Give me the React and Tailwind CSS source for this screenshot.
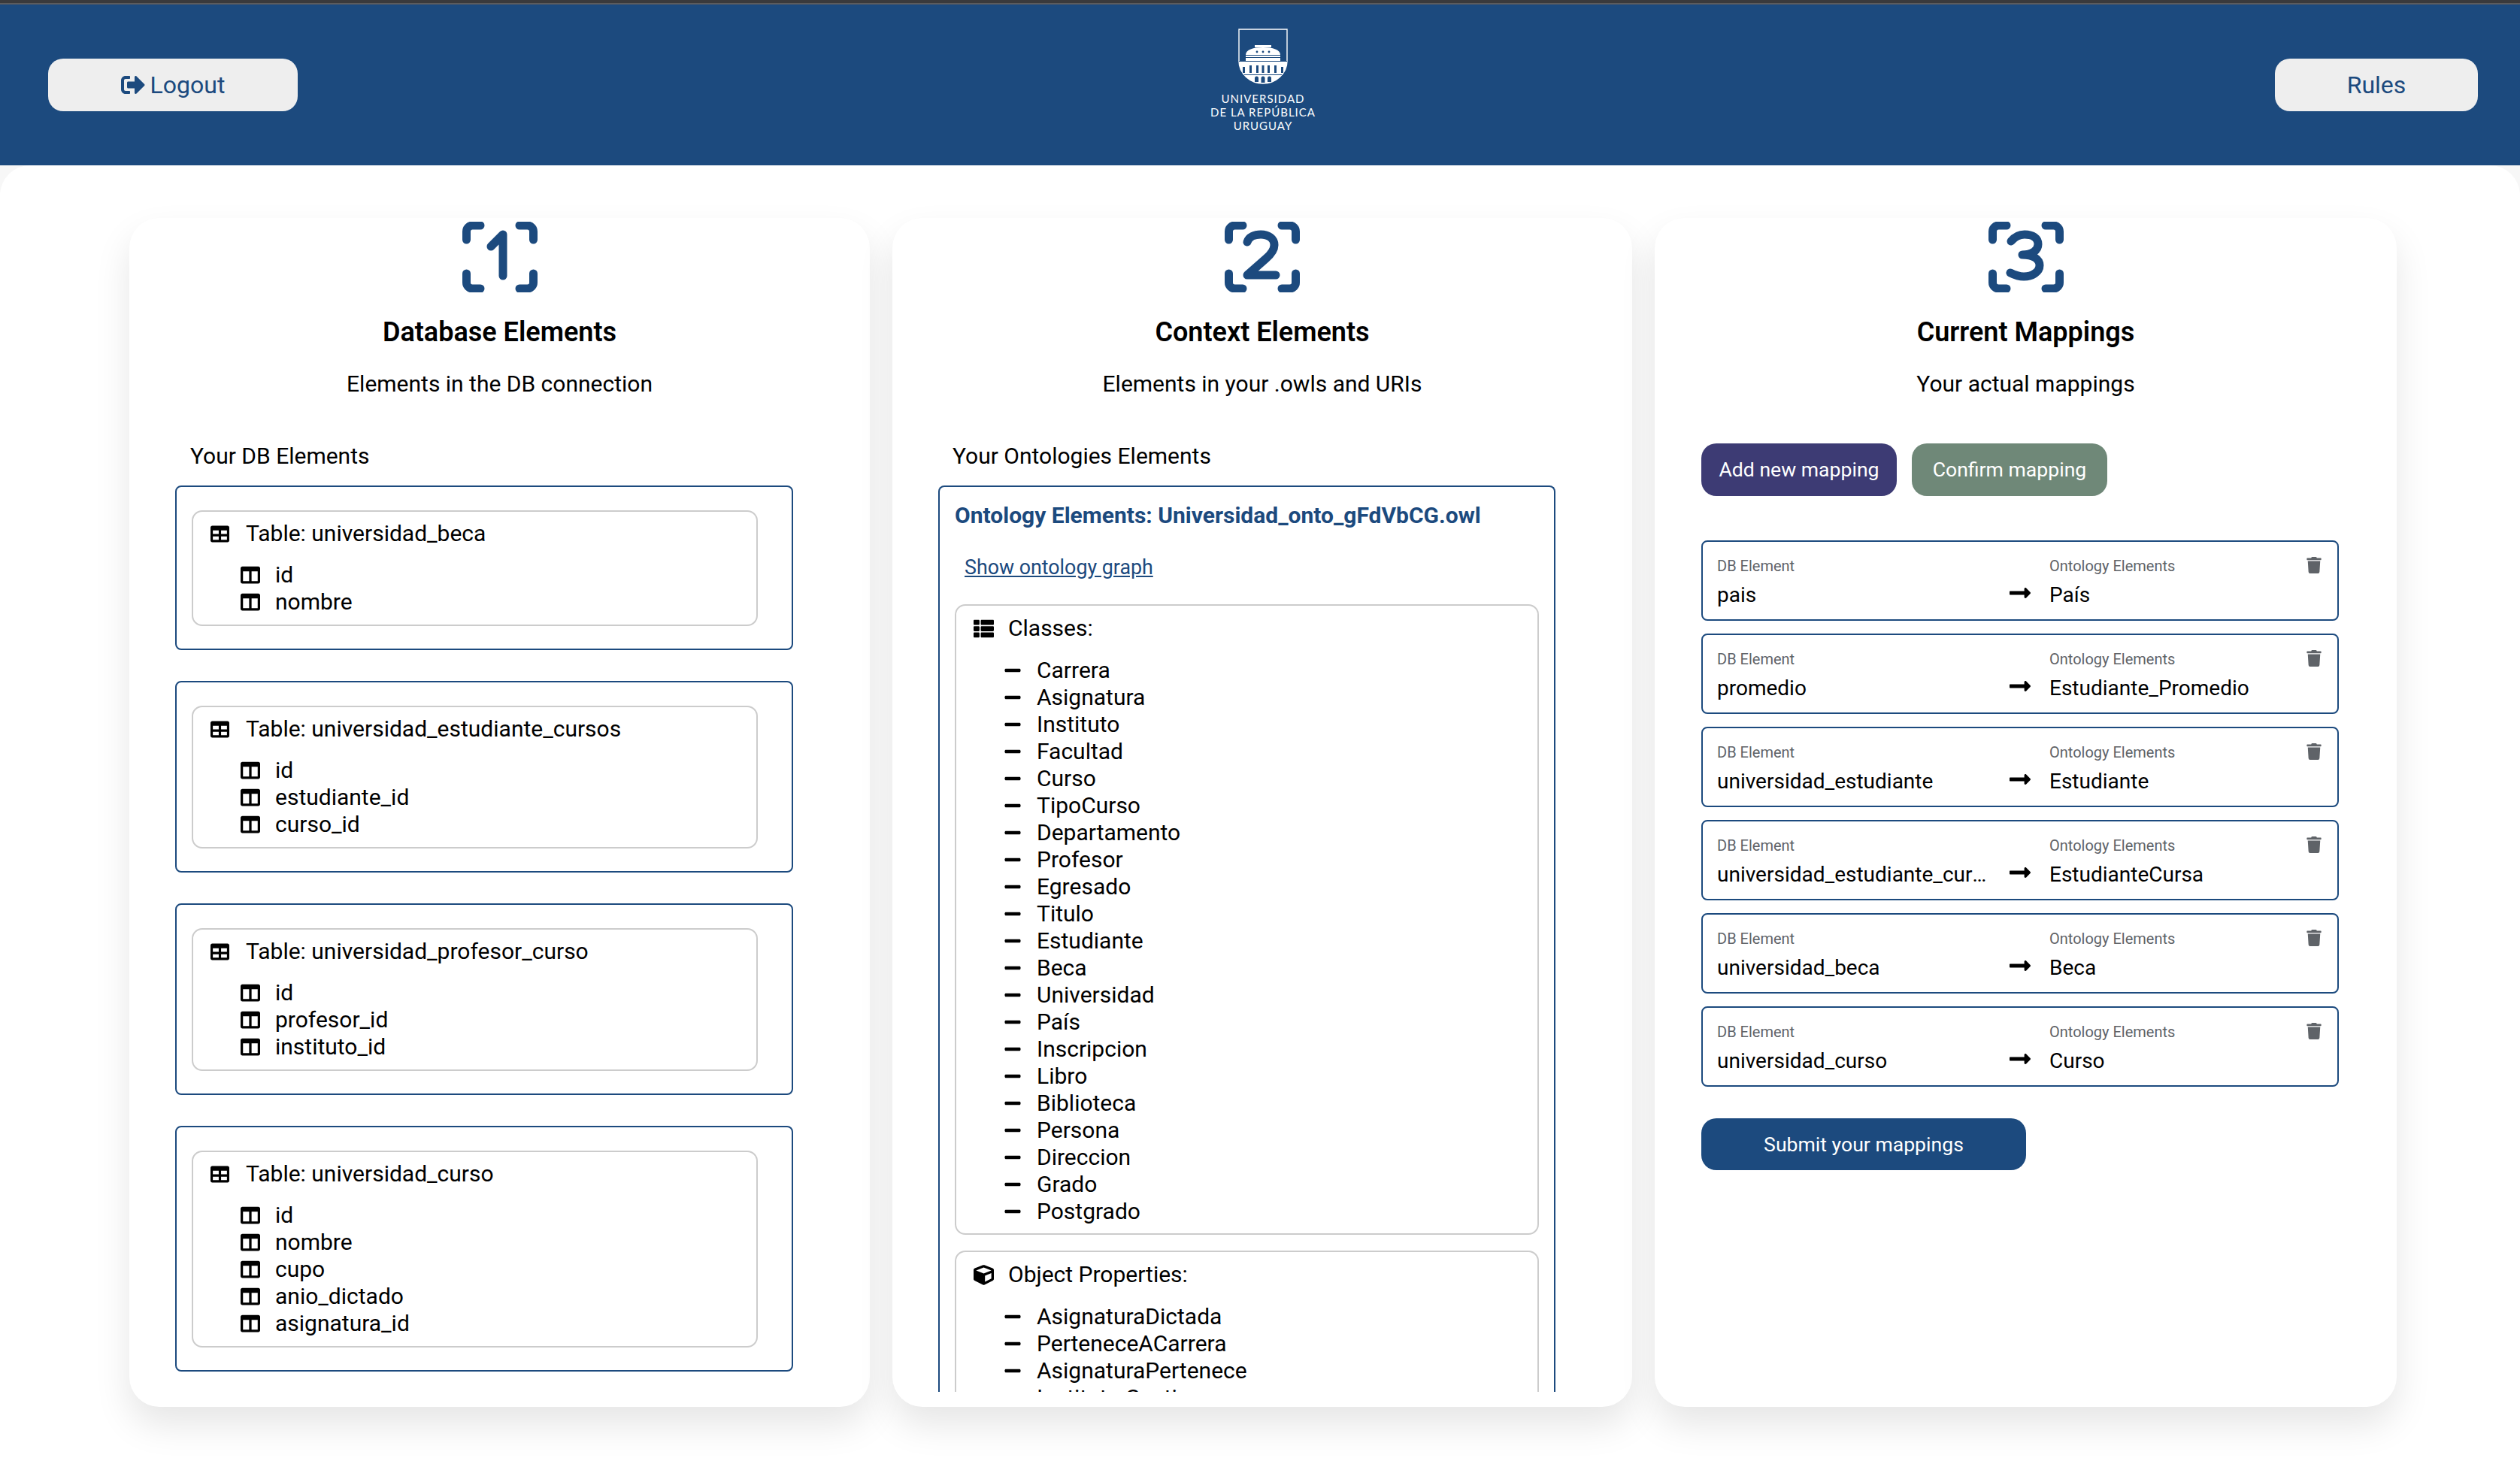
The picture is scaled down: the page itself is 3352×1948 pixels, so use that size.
import { FaSignOutAlt, FaTable, FaColumns, FaThList, FaCube, FaMinus, FaTrash, FaLongArrowAltRight } from "react-icons/fa";

const tables = [
  { name: "universidad_beca", columns: ["id", "nombre"] },
  { name: "universidad_estudiante_cursos", columns: ["id", "estudiante_id", "curso_id"] },
  { name: "universidad_profesor_curso", columns: ["id", "profesor_id", "instituto_id"] },
  { name: "universidad_curso", columns: ["id", "nombre", "cupo", "anio_dictado", "asignatura_id"] },
];

const classes = [
  "Carrera", "Asignatura", "Instituto", "Facultad", "Curso", "TipoCurso", "Departamento",
  "Profesor", "Egresado", "Titulo", "Estudiante", "Beca", "Universidad", "País", "Inscripcion",
  "Libro", "Biblioteca", "Persona", "Direccion", "Grado", "Postgrado",
];

const objectProps = ["AsignaturaDictada", "PerteneceACarrera", "AsignaturaPertenece", "Instituto Gestion"];

const mappings = [
  { db: "pais", onto: "País" },
  { db: "promedio", onto: "Estudiante_Promedio" },
  { db: "universidad_estudiante", onto: "Estudiante" },
  { db: "universidad_estudiante_cursos", onto: "EstudianteCursa" },
  { db: "universidad_beca", onto: "Beca" },
  { db: "universidad_curso", onto: "Curso" },
];

const digits = {
  1: "M38 33 L54 17 V72",
  2: "M30 27 C32 20 40 17 48 17 C58 17 66 22 66 31 C66 38 62 43 55 49 L30 71 H68",
  3: "M30 26 C35 20 41 17 48 17 C59 17 66 22 66 30 C66 38 58 44 45 44 C60 44 68 50 68 58 C68 67 58 73 47 73 C40 73 35 71 29 68",
};

function StepIcon({ n }) {
  return (
    <svg width="100" height="94" viewBox="0 0 100 94" fill="none" stroke="#1c4a7e" strokeWidth="11" strokeLinecap="round" strokeLinejoin="round">
      <path d="M5.5 24 V13 a8 8 0 0 1 8-8 H24" />
      <path d="M94.5 24 V13 a8 8 0 0 0-8-8 H76" />
      <path d="M5.5 69 V81 a8 8 0 0 0 8 8 H24" />
      <path d="M94.5 69 V81 a8 8 0 0 1-8 8 H76" />
      <path d={digits[n]} />
    </svg>
  );
}

function Shield() {
  return (
    <svg width="66" height="74" viewBox="0 0 66 74">
      <path d="M1 1 H65 V43 C65 60 50 73 33 73 C16 73 1 60 1 43 Z" fill="none" stroke="#fff" strokeWidth="1.4" />
      <path d="M1 43 H65 C65 60 50 73 33 73 C16 73 1 60 1 43 Z" fill="#fff" />
      <rect x="22" y="22" width="22" height="3" fill="#fff" />
      <path d="M10 35 C10 28 20 25 33 25 C46 25 56 28 56 35 Z" fill="#fff" />
      <rect x="10" y="36" width="46" height="7" fill="#fff" />
      <circle cx="25" cy="31" r="1.4" fill="#1c4a7e" />
      <circle cx="33" cy="31" r="1.4" fill="#1c4a7e" />
      <circle cx="41" cy="31" r="1.4" fill="#1c4a7e" />
      <g fill="#1c4a7e">
        <rect x="10" y="38" width="46" height="1" />
        <rect x="1" y="43" width="64" height="1" />
        <rect x="6" y="51" width="3" height="8" />
        <rect x="15" y="49" width="3" height="10" />
        <rect x="24" y="49" width="3" height="10" />
        <rect x="31.5" y="49" width="3" height="10" />
        <rect x="39" y="49" width="3" height="10" />
        <rect x="48" y="49" width="3" height="10" />
        <rect x="57" y="51" width="3" height="8" />
        <rect x="8" y="61" width="50" height="1" />
        <path d="M22 71 V66 a2.5 2.5 0 0 1 5 0 V71 Z" />
        <path d="M30.5 72 V66 a2.5 2.5 0 0 1 5 0 V72 Z" />
        <path d="M39 71 V66 a2.5 2.5 0 0 1 5 0 V71 Z" />
      </g>
    </svg>
  );
}

function CardHead({ n, title, subtitle }) {
  return (
    <div className="flex flex-col items-center pt-[5px]">
      <StepIcon n={n} />
      <h2 className="mt-[33px] text-[36px] leading-[40px] font-semibold text-black">{title}</h2>
      <p className="mt-[29px] text-[30px] leading-[40px] text-black">{subtitle}</p>
    </div>
  );
}

function ItemRow({ icon, children }) {
  return (
    <li className="flex items-center text-[30px] leading-[36px] text-black">
      {icon}
      {children}
    </li>
  );
}

function TableBox({ table }) {
  return (
    <div className="rounded-[8px] border-2 border-[#1c4a7e] pt-[31px] pb-[30px] pl-[20px] pr-[45px]">
      <div className="rounded-[14px] border-2 border-[#cccccc] pt-[11px] pb-[12px] pl-[23px]">
        <div className="flex items-center gap-[22px] text-[30px] leading-[36px] text-black">
          <FaTable className="w-[25px] h-[25px]" />
          <span>Table: {table.name}</span>
        </div>
        <ul className="mt-[19px] pl-[40px]">
          {table.columns.map((c) => (
            <ItemRow key={c} icon={<FaColumns className="w-[26px] h-[26px] mr-[20px]" />}>{c}</ItemRow>
          ))}
        </ul>
      </div>
    </div>
  );
}

function OntoGroup({ icon, title, items, className }) {
  return (
    <div className={"rounded-[14px] border-2 border-[#cccccc] pt-[12px] pb-[11px] pl-[23px] " + (className || "")}>
      <div className="flex items-center gap-[19px] text-[30px] leading-[36px] text-black">
        {icon}
        <span>{title}</span>
      </div>
      <ul className="mt-[20px] pl-[40px]">
        {items.map((c) => (
          <ItemRow key={c} icon={<FaMinus className="w-[24px] h-[24px] mr-[20px]" />}>{c}</ItemRow>
        ))}
      </ul>
    </div>
  );
}

function MappingRow({ m }) {
  return (
    <div className="relative h-[107px] rounded-[8px] border-2 border-[#1c4a7e] pl-[19px] pt-[20px] flex">
      <div className="w-[365px]">
        <div className="text-[20px] leading-[24px] text-[#5f6368]">DB Element</div>
        <div className="mt-[9px] text-[28px] leading-[36px] text-black truncate">{m.db}</div>
      </div>
      <div className="w-[77px] flex justify-start pl-[22px] pt-[32px]">
        <FaLongArrowAltRight className="w-[32px] h-[32px] text-black" />
      </div>
      <div>
        <div className="text-[20px] leading-[24px] text-[#5f6368]">Ontology Elements</div>
        <div className="mt-[9px] text-[28px] leading-[36px] text-black">{m.onto}</div>
      </div>
      <FaTrash className="absolute top-[20px] right-[21px] w-[20px] h-[22px] text-[#5f6368]" />
    </div>
  );
}

function Card({ children }) {
  return (
    <section className="h-[1582px] rounded-[40px] bg-white shadow-[0_24px_48px_rgba(0,0,0,0.1)]">
      {children}
    </section>
  );
}

export default function App() {
  return (
    <div className="min-h-[1948px] bg-[#f7f7f7] font-['Roboto',sans-serif]">
      <div className="h-[6px] bg-[#3a3a3c] border-b-2 border-[#5c5c5e]" />
      <header className="h-[214px] bg-[#1c4a7e] grid grid-cols-[1fr_auto_1fr] items-center pl-[64px] pr-[56px]">
        <div className="flex justify-start">
          <button className="w-[332px] h-[70px] rounded-[20px] bg-[#eeeeee] text-[#1c4a7e] text-[32px] flex items-center justify-center gap-[7px]">
            <FaSignOutAlt className="w-[32px] h-[32px]" />
            Logout
          </button>
        </div>
        <div className="mb-[12px] flex flex-col items-center text-white font-['Lato',sans-serif] text-[15px] leading-[18px] tracking-[1px]">
          <Shield />
          <div className="mt-[10px] flex flex-col items-center">
            <span>UNIVERSIDAD</span>
            <span>DE LA REPÚBLICA</span>
            <span>URUGUAY</span>
          </div>
        </div>
        <div className="flex justify-end">
          <button className="w-[270px] h-[70px] rounded-[20px] bg-[#eeeeee] text-[#1c4a7e] text-[32px]">Rules</button>
        </div>
      </header>

      <main className="min-h-[1728px] rounded-t-[40px] bg-white pt-[70px] px-[172px] pr-[165px] grid grid-cols-[985px_984px_987px] gap-x-[30px] content-start">
        {/* Column 1 */}
        <Card>
          <CardHead n={1} title="Database Elements" subtitle="Elements in the DB connection" />
          <div className="pl-[61px] pr-[102px]">
            <p className="mt-[56px] pl-[20px] text-[30px] leading-[40px] text-black">Your DB Elements</p>
            <div className="mt-[19px] flex flex-col gap-[41px]">
              {tables.map((t) => <TableBox key={t.name} table={t} />)}
            </div>
          </div>
        </Card>

        {/* Column 2 */}
        <Card>
          <CardHead n={2} title="Context Elements" subtitle="Elements in your .owls and URIs" />
          <div className="pl-[61px] pr-[102px]">
            <p className="mt-[56px] pl-[19px] text-[30px] leading-[40px] text-black">Your Ontologies Elements</p>
            <div className="mt-[19px] h-[1206px] overflow-hidden rounded-t-[8px] border-x-2 border-t-2 border-[#1c4a7e] px-[20px]">
              <h3 className="mt-[20px] text-[30px] leading-[36px] font-bold text-[#1c4a7e]">Ontology Elements: Universidad_onto_gFdVbCG.owl</h3>
              <a href="#graph" className="mt-[33px] ml-[13px] block text-[26.8px] leading-[36px] text-[#1c4a7e] underline">Show ontology graph</a>
              <OntoGroup className="mt-[31px]" icon={<FaThList className="w-[27px] h-[27px]" />} title="Classes:" items={classes} />
              <OntoGroup className="mt-[21px]" icon={<FaCube className="w-[27px] h-[27px]" />} title="Object Properties:" items={objectProps} />
            </div>
          </div>
        </Card>

        {/* Column 3 */}
        <Card>
          <CardHead n={3} title="Current Mappings" subtitle="Your actual mappings" />
          <div className="pl-[62px] pr-[77px]">
            <div className="mt-[59px] flex gap-[20px]">
              <button className="w-[260px] h-[70px] rounded-[20px] bg-[#3d3b74] text-white text-[26.6px]">Add new mapping</button>
              <button className="w-[260px] h-[70px] rounded-[20px] bg-[#6f8878] text-white text-[26.6px]">Confirm mapping</button>
            </div>
            <div className="mt-[59px] flex flex-col gap-[17px]">
              {mappings.map((m) => <MappingRow key={m.db} m={m} />)}
            </div>
            <button className="mt-[42px] w-[432px] h-[69px] rounded-[20px] bg-[#1c4a7e] text-white text-[26.6px]">Submit your mappings</button>
          </div>
        </Card>
      </main>
    </div>
  );
}
